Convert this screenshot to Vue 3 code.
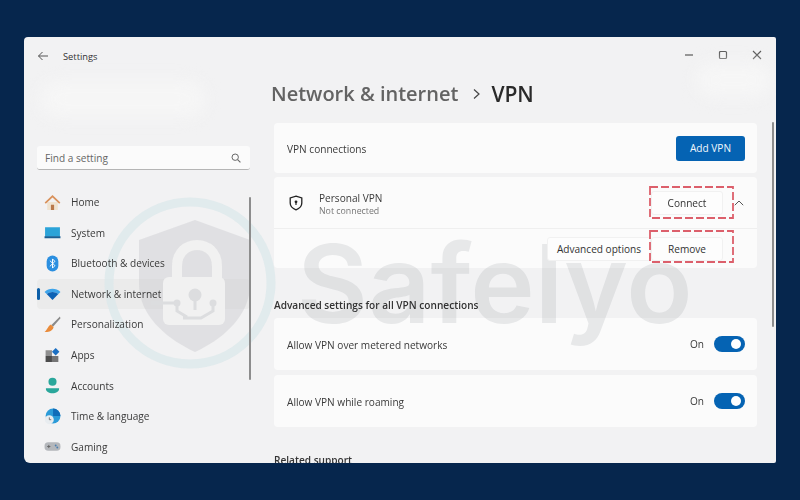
<script setup>
const row1 = 'Allow VPN over metered networks'
const row2 = 'Allow VPN while roaming'
</script>

<template>
  <div class="page">
    <div class="window">
      <header class="titlebar">
        <svg class="back" width="12" height="12" viewBox="0 0 12 12"><path d="M11 6H1.500M5.500 2 1.500 6l4 4" fill="none" stroke="#555" stroke-width="1"/></svg>
        <span class="app-name">Settings</span>
        <div class="controls">
          <svg width="10" height="10" viewBox="0 0 10 10"><path d="M1 5h8" stroke="#777" stroke-width="1.400"/></svg>
          <svg width="10" height="10" viewBox="0 0 10 10"><rect x="1.500" y="1.500" width="7" height="7" rx="1" fill="none" stroke="#555" stroke-width="1.200"/></svg>
          <svg width="10" height="10" viewBox="0 0 10 10"><path d="M1 1l8 8M9 1 1 9" stroke="#555" stroke-width="1.100"/></svg>
        </div>
      </header>

      <div class="content">
        <aside class="sidebar">
          <div class="search">
            <span>Find a setting</span>
            <svg width="10" height="10" viewBox="0 0 10 10"><circle cx="4.200" cy="4.200" r="3.200" fill="none" stroke="#666" stroke-width="1"/><path d="M6.600 6.600 9.400 9.400" stroke="#666" stroke-width="1.100"/></svg>
          </div>
          <nav class="nav">
            <div class="item">
              <svg class="ico" viewBox="0 0 16 16"><path d="M3 7.500h10V15H3z" fill="#efe3d0"/><path d="M6.500 10h3v5h-3z" fill="#b9794a"/><path d="M8 1 .6 8l1.100 1.100L8 3.200l6.300 5.900L15.400 8z" fill="#d9925c"/></svg>
              <span>Home</span>
            </div>
            <div class="item">
              <svg class="ico" viewBox="0 0 16 16"><path d="M1 3h14v9H1z" fill="#2ba3d8"/><path d="M0.500 11.500h15V13.500h-15z" fill="#1b5f93"/></svg>
              <span>System</span>
            </div>
            <div class="item">
              <svg class="ico" viewBox="0 0 16 16"><rect x="2.500" y="0.500" width="11" height="15" rx="5.500" fill="#2b8fe0"/><path d="M5.500 5.300 10.300 10 8 12.300V3.700L10.300 6 5.500 10.700" fill="none" stroke="#fff" stroke-width="0.900"/></svg>
              <span>Bluetooth &amp; devices</span>
            </div>
            <div class="item active">
              <i class="marker"></i>
              <svg class="ico" viewBox="0 0 16 16"><path d="M0.500 6.500C4.500 2.500 11.500 2.500 15.500 6.500L13.500 8.500C10.500 5.800 5.500 5.800 2.500 8.500z" fill="#3ea4ea"/><path d="M2.500 8.500C5.500 5.800 10.500 5.800 13.500 8.500L8 14z" fill="#0d62b5"/></svg>
              <span>Network &amp; internet</span>
            </div>
            <div class="item">
              <svg class="ico" viewBox="0 0 16 16"><path d="M15 .5 7 8.500l1.500 1.500L15.500 2z" fill="#8a8a8a"/><path d="M6.500 8 9 10.500C8 14 4 15.500.5 15 3 13.500 3.500 9.500 6.500 8z" fill="#e98b3a"/></svg>
              <span>Personalization</span>
            </div>
            <div class="item">
              <svg class="ico" viewBox="0 0 16 16"><path d="M1.500 3h6v5.500h-6z" fill="#8f8f8f"/><path d="M1.500 8.500h6V14h-6z" fill="#4c4c4c"/><path d="M7.500 8.500h6V14h-6z" fill="#757575"/><path d="M11 1 14.500 4.500 11 8 7.500 4.500z" fill="#1b6fc2"/></svg>
              <span>Apps</span>
            </div>
            <div class="item">
              <svg class="ico" viewBox="0 0 16 16"><circle cx="8" cy="4.500" r="3.800" fill="#2aa79b"/><path d="M1.800 10.500h12.400c.4 3-3 4.800-6.200 4.800s-6.600-1.800-6.200-4.800z" fill="#2aa79b"/></svg>
              <span>Accounts</span>
            </div>
            <div class="item">
              <svg class="ico" viewBox="0 0 16 16"><circle cx="8.500" cy="7.500" r="7" fill="#2b9bd8"/><path d="M8.500.5a7 7 0 0 1 7 7H8.500z" fill="#0f6cb8"/><circle cx="5" cy="11" r="4.200" fill="#e8ecef"/><path d="M5 8.800V11h1.800" fill="none" stroke="#666" stroke-width="0.800"/></svg>
              <span>Time &amp; language</span>
            </div>
            <div class="item">
              <svg class="ico" viewBox="0 0 16 16"><rect x="0.500" y="4" width="15" height="8" rx="3.500" fill="#b4b7bb"/><path d="M3 8h3M4.500 6.500v3" stroke="#666" stroke-width="0.900"/><circle cx="11" cy="7" r="0.900" fill="#4d7fb0"/><circle cx="12.500" cy="9" r="0.900" fill="#4d7fb0"/></svg>
              <span>Gaming</span>
            </div>
          </nav>
        </aside>

        <main class="main">
          <h1 class="crumb">
            <span class="parent">Network &amp; internet</span>
            <svg width="9" height="12" viewBox="0 0 9 12"><path d="M2 1.500 7 6l-5 4.500" fill="none" stroke="#444" stroke-width="1.200"/></svg>
            <span class="current">VPN</span>
          </h1>

          <section class="card single">
            <span class="label">VPN connections</span>
            <button class="btn primary">Add VPN</button>
          </section>

          <section class="card expander">
            <div class="exp-head">
              <svg class="shield" width="14" height="16" viewBox="0 0 14 16"><path d="M7 1.200 12.800 3v5c0 3.300-2.500 5.600-5.800 6.800C3.700 13.600 1.200 11.300 1.200 8V3z" fill="none" stroke="#222" stroke-width="1.300"/><circle cx="7" cy="6.800" r="1.400" fill="#222"/><path d="M7 7v3" stroke="#222" stroke-width="1.200"/></svg>
              <div class="exp-text">
                <span class="exp-title">Personal VPN</span>
                <span class="exp-sub">Not connected</span>
              </div>
              <button class="btn plain connect">Connect</button>
              <svg class="chev" width="10" height="6" viewBox="0 0 10 6"><path d="M.8 5.200 5 1l4.200 4.200" fill="none" stroke="#555" stroke-width="1"/></svg>
            </div>
            <div class="exp-body">
              <button class="btn plain adv">Advanced options</button>
              <button class="btn plain remove">Remove</button>
            </div>
            <svg class="dash dash-a" width="85" height="33" viewBox="0 0 85 33"><rect x="1" y="1" width="83" height="31" fill="none" stroke="#dc5f6b" stroke-width="1.800" stroke-dasharray="8 3"/></svg>
            <svg class="dash dash-b" width="85" height="33" viewBox="0 0 85 33"><rect x="1" y="1" width="83" height="31" fill="none" stroke="#dc5f6b" stroke-width="1.800" stroke-dasharray="8 3"/></svg>
          </section>

          <h2 class="section">Advanced settings for all VPN connections</h2>

          <section class="card toggle-row">
            <span class="label">{{ row1 }}</span>
            <div class="toggle-wrap"><span class="on">On</span><i class="toggle"></i></div>
          </section>
          <section class="card toggle-row">
            <span class="label">{{ row2 }}</span>
            <div class="toggle-wrap"><span class="on">On</span><i class="toggle"></i></div>
          </section>

          <h2 class="section related">Related support</h2>
        </main>
      </div>

      <i class="scroll scroll-side"></i>
      <i class="scroll scroll-main"></i>
      <i class="blob blob-a"></i>
      <i class="blob blob-b"></i>

      <div class="mark">
        <svg class="mark-logo" width="190" height="190" viewBox="0 0 190 190">
          <circle cx="95" cy="95" r="81" fill="none" stroke="#dce8eb" stroke-opacity="0.8" stroke-width="9"/>
          <path d="M100 32 155 52V96C155 128 128 151 100 164 72 151 44 128 44 96V52z" fill="#c9c9cc" fill-opacity="0.42"/>
          <path d="M82 90V78C82 50 122 50 122 78V90" fill="none" stroke="#f1f1f1" stroke-width="10"/>
          <rect x="68" y="89" width="62" height="48" rx="6" fill="#f1f1f1"/>
          <circle cx="100" cy="107" r="6.500" fill="#dcdddf"/>
          <circle cx="82" cy="115" r="3.500" fill="#dcdddf"/>
          <circle cx="118" cy="115" r="3.500" fill="#dcdddf"/>
          <path d="M100 110v12M82 115H56M82 115v8l10 6M118 115v8l-12 7H88" fill="none" stroke="#dcdddf" stroke-width="3"/>
        </svg>
        <span class="mark-text">Safelyo</span>
      </div>
    </div>
  </div>
</template>

<style>
html, body { margin: 0; background: #06264d; }
</style>

<style scoped>
.page {
  width: 800px;
  height: 500px;
  box-sizing: border-box;
  padding: 37px 24px;
  background: #06264d;
  font-family: "Open Sans", "Noto Sans", sans-serif;
  color: #2b2b2b;
  overflow: hidden;
}
.window {
  position: relative;
  height: 426px;
  background: #f2f2f3;
  border-radius: 4px 2px 2px 6px;
  overflow: hidden;
  display: flex;
  flex-direction: column;
  filter: blur(0.45px);
}
.titlebar {
  display: flex;
  align-items: center;
  height: 38px;
  flex: none;
  padding: 0 14px 0 13px;
}
.back { margin-right: 14px; }
.app-name { font-size: 9.300px; color: #333; }
.controls {
  margin-left: auto;
  display: flex;
  gap: 24px;
  align-items: center;
  margin-top: -3px;
}
.content { display: flex; flex: 1; min-height: 0; }
.sidebar {
  width: 250px;
  flex: none;
  box-sizing: border-box;
  padding: 71px 24px 0 13px;
}
.search {
  height: 24px;
  box-sizing: border-box;
  background: #fbfbfb;
  border-bottom: 1px solid #b5b5b5;
  border-radius: 3px;
  display: flex;
  align-items: center;
  justify-content: space-between;
  padding: 0 9px 0 8px;
  font-size: 10.100px;
  color: #666;
}
.nav { margin-top: 17px; display: flex; flex-direction: column; }
.item {
  position: relative;
  height: 30.560px;
  display: flex;
  align-items: center;
  padding-left: 7px;
  gap: 10px;
  font-size: 10.100px;
  color: #3a3a3a;
  flex: none;
  border-radius: 4px;
}
.item span, .label, .on, .exp-title, .exp-sub, .section, .btn, .toggle, .dash {
  position: relative;
  z-index: 2;
}
.item.active { background: #ebebeb; }
.marker {
  position: absolute;
  left: 0;
  top: 9px;
  width: 2.500px;
  height: 12px;
  border-radius: 2px;
  background: #0d5fa8;
}
.ico { width: 17px; height: 17px; flex: none; }
.main {
  flex: 1;
  min-width: 0;
  box-sizing: border-box;
  padding: 0 19px 0 0;
}
.crumb {
  margin: 0 0 0 -3px;
  height: 48px;
  display: flex;
  align-items: flex-start;
  font-size: 20px;
  line-height: 38px;
  font-weight: 600;
}
.crumb svg { margin: 13px 10px 0 14px; }
.parent { color: #636363; }
.current { color: #2a2a2a; font-size: 21px; }
.card {
  background: #fbfbfb;
  border-radius: 4px;
  font-size: 10.100px;
  color: #3a3a3a;
  box-sizing: border-box;
}
.label { top: 1px; }
.single {
  height: 50px;
  display: flex;
  align-items: center;
  justify-content: space-between;
  padding: 0 12px 0 13px;
}
.btn {
  font: inherit;
  font-size: 10.100px;
  border: 0;
  border-radius: 3px;
  padding: 0;
  color: #333;
  background: #fdfdfd;
}
.primary {
  width: 69px;
  height: 25px;
  background: #0563b3;
  color: #f3f8fc;
}
.expander {
  position: relative;
  margin-top: 4px;
  height: 91px;
}
.exp-head {
  height: 52px;
  display: flex;
  align-items: center;
  padding-left: 15px;
  border-bottom: 1px solid #efefef;
  box-sizing: border-box;
}
.shield { flex: none; }
.exp-text {
  display: flex;
  flex-direction: column;
  margin: 4px 0 0 16px;
  line-height: 13px;
}
.exp-title { color: #3a3a3a; }
.exp-sub { font-size: 8.800px; color: #777; }
.connect {
  width: 72px;
  height: 24px;
  margin-left: auto;
  margin-top: 1px;
  border: 1px solid #f1f1f1;
}
.chev { margin: 0 13px 0 11px; flex: none; }
.exp-body {
  height: 39px;
  display: flex;
  justify-content: flex-end;
  align-items: center;
  padding-right: 34px;
}
.adv {
  width: 104px;
  height: 24px;
  border: 1px solid #f1f1f1;
}
.remove {
  width: 72px;
  height: 24px;
  border: 1px solid #f1f1f1;
}
.dash {
  position: absolute;
  left: 375px;
}
.dash-a { top: 9px; }
.dash-b { top: 53px; }
.section {
  margin: 30px 0 6px;
  font-size: 10.100px;
  line-height: 14px;
  font-weight: 600;
  color: #333;
}
.toggle-row {
  height: 52px;
  margin-bottom: 5px;
  display: flex;
  align-items: center;
  justify-content: space-between;
  padding: 0 12px 0 13px;
}
.toggle-wrap { display: flex; align-items: center; gap: 10px; }
.on { font-size: 10.100px; }
.toggle {
  width: 31px;
  height: 16px;
  border-radius: 8px;
  background: #0563b3;
}
.toggle::after {
  content: "";
  position: absolute;
  right: 4px;
  top: 3px;
  width: 10px;
  height: 10px;
  border-radius: 50%;
  background: #fff;
}
.related { margin-top: 26px; }
.scroll {
  position: absolute;
  width: 1.500px;
  background: #8d8d8d;
  border-radius: 1px;
  z-index: 2;
}
.scroll-side { left: 225px; top: 160px; height: 183px; }
.scroll-main { left: 748px; top: 85px; height: 205px; }
.blob {
  position: absolute;
  background: #f6f6f6;
  border-radius: 20px;
  filter: blur(8px);
  pointer-events: none;
}
.blob-a { left: 16px; top: 44px; width: 165px; height: 36px; }
.blob-b { left: 672px; top: 26px; width: 75px; height: 34px; }
.mark {
  position: absolute;
  inset: 0;
  z-index: 1;
  pointer-events: none;
}
.mark-logo {
  position: absolute;
  left: 71px;
  top: 151px;
}
.mark-text {
  position: absolute;
  left: 273px;
  top: 181px;
  font-family: Inter, sans-serif;
  font-size: 109px;
  line-height: 130px;
  font-weight: 600;
  color: rgba(120, 125, 135, 0.15);
}
</style>
